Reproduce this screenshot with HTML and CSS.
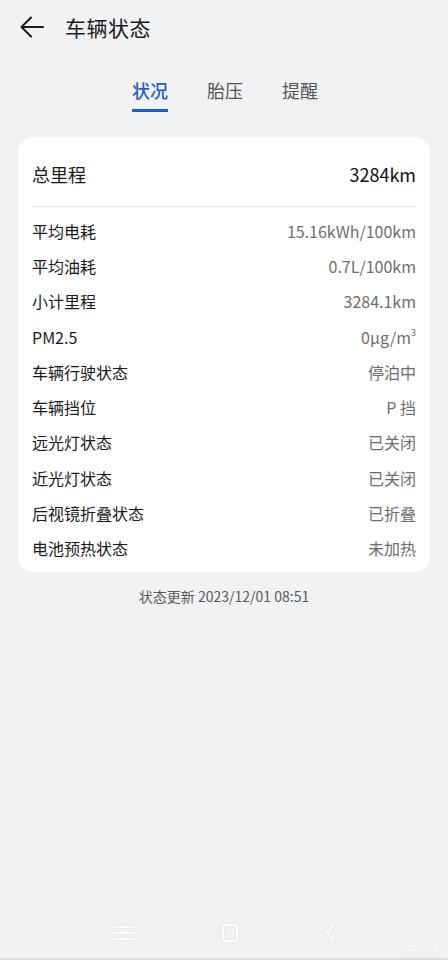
FILE: index.html
```html
<!DOCTYPE html>
<html lang="zh-CN">
<head>
  <meta charset="UTF-8">
  <title>车辆状态</title>
  <link rel="stylesheet" href="styles.css">
</head>
<body>

  <!-- 顶部栏 -->
  <header class="topbar">
    <svg class="back" width="26" height="26" viewBox="0 0 26 26">
      <path d="M24 13H3M12 3.5L2.5 13L12 22.5" fill="none" stroke="#1a1a1a" stroke-width="2" stroke-linecap="round" stroke-linejoin="round"/>
    </svg>
    <h1>车辆状态</h1>
  </header>

  <!-- 标签 -->
  <nav class="tabs">
    <button class="active">状况</button>
    <button>胎压</button>
    <button>提醒</button>
  </nav>

  <!-- 状态卡片 -->
  <section class="card">
    <div class="total">
      <span>总里程</span>
      <strong>3284km</strong>
    </div>
    <div class="divider"></div>
    <ul class="list">
      <li><span>平均电耗</span><em>15.16kWh/100km</em></li>
      <li><span>平均油耗</span><em>0.7L/100km</em></li>
      <li><span>小计里程</span><em>3284.1km</em></li>
      <li><span>PM2.5</span><em>0μg/m<sup>3</sup></em></li>
      <li><span>车辆行驶状态</span><em>停泊中</em></li>
      <li><span>车辆挡位</span><em>P 挡</em></li>
      <li><span>远光灯状态</span><em>已关闭</em></li>
      <li><span>近光灯状态</span><em>已关闭</em></li>
      <li><span>后视镜折叠状态</span><em>已折叠</em></li>
      <li><span>电池预热状态</span><em>未加热</em></li>
    </ul>
  </section>

  <p class="updated">状态更新 2023/12/01 08:51</p>

  <!-- 系统导航 -->
  <footer class="sysnav">
    <svg width="24" height="18" viewBox="0 0 24 18">
      <path d="M2 3H22M2 9H22M2 15H22" stroke="#fff" stroke-width="2" stroke-linecap="round"/>
    </svg>
    <svg width="20" height="20" viewBox="0 0 20 20">
      <rect x="3" y="2" width="14" height="16" rx="3" fill="none" stroke="#fff" stroke-width="2"/>
    </svg>
    <svg width="12" height="20" viewBox="0 0 12 20">
      <path d="M9 3L3 10L9 17" fill="none" stroke="#fff" stroke-width="2" stroke-linecap="round" stroke-linejoin="round"/>
    </svg>
    <span class="mark">汽车之家</span>
  </footer>

</body>
</html>
```

FILE: styles.css
```css
body {
  margin: 0;
  font-family: "Noto Sans CJK SC", "Noto Sans", sans-serif;
  background-color: #f1f2f4;
  color: #1a1a1a;
  min-height: 960px;
  display: flex;
  flex-direction: column;
}

.topbar {
  height: 53px;
  display: flex;
  align-items: center;
  padding-left: 19px;
}

.topbar .back {
  margin-right: 20px;
}

.topbar h1 {
  margin: 0;
  font-size: 21px;
  font-weight: 400;
  letter-spacing: 0.5px;
}

.tabs {
  display: flex;
  justify-content: center;
  gap: 39px;
  margin-top: 25px;
  padding-left: 2px;
}

.tabs button {
  background: none;
  border: none;
  padding: 0 0 7px;
  font-family: inherit;
  font-size: 18px;
  line-height: 24px;
  color: #555;
  border-bottom: 3px solid transparent;
}

.tabs button.active {
  color: #1f5fc4;
  font-weight: 500;
  border-bottom-color: #1f5fc4;
}

.card {
  margin: 25px 18px 0;
  background-color: #fff;
  border-radius: 16px;
  padding-bottom: 6px;
}

.total {
  display: flex;
  justify-content: space-between;
  align-items: center;
  padding: 25px 14px 20px;
  font-size: 18px;
  line-height: 24px;
}

.total strong {
  font-weight: 400;
  color: #111;
}

.divider {
  height: 1px;
  background-color: #e4e4e6;
  margin: 0 14px;
}

.list {
  list-style: none;
  margin: 0;
  padding: 6px 14px 0;
}

.list li {
  height: 35.3px;
  display: flex;
  justify-content: space-between;
  align-items: center;
  font-size: 16px;
}

.list em {
  font-style: normal;
  color: #6e6e6e;
}

.list sup {
  font-size: 9px;
  vertical-align: 8px;
  line-height: 0;
}

.updated {
  margin: 14px 0 0;
  text-align: center;
  font-size: 14px;
  line-height: 20px;
  color: #5a5a5a;
}

.sysnav {
  margin-top: auto;
  height: 50px;
  display: flex;
  align-items: center;
  justify-content: center;
  gap: 84px;
  border-bottom: 2px solid #dcdcde;
  position: relative;
}

.sysnav svg {
  filter: drop-shadow(0 0 1px rgba(0, 0, 0, 0.08));
}

.mark {
  position: absolute;
  right: 6px;
  bottom: 4px;
  font-size: 11px;
  color: #fff;
  text-shadow: 0 0 1px rgba(0, 0, 0, 0.12);
}
```
